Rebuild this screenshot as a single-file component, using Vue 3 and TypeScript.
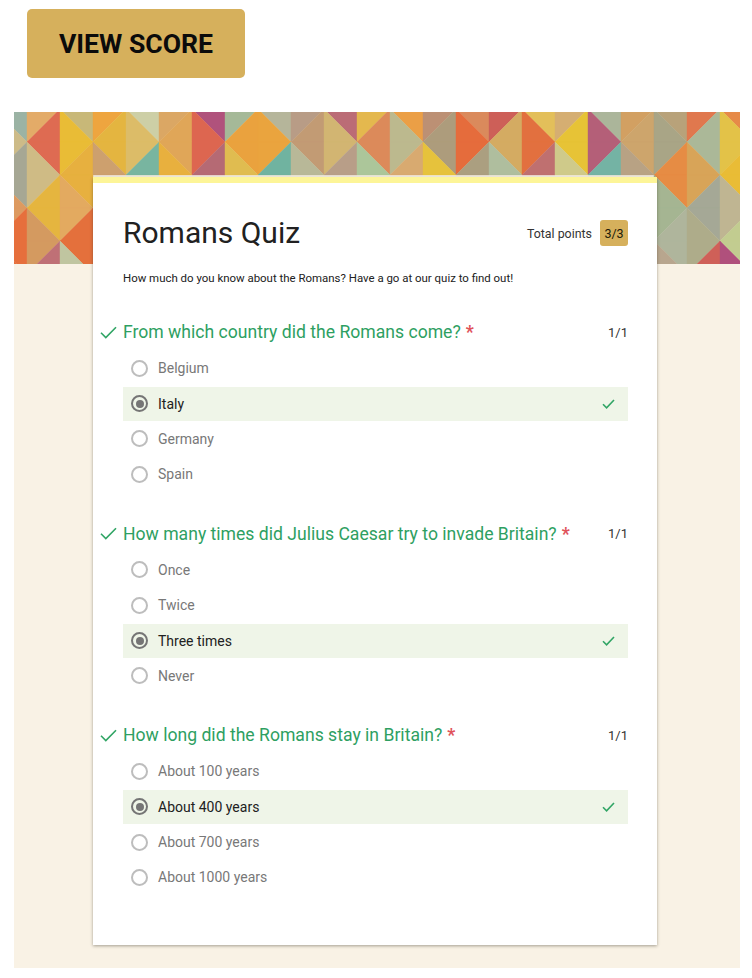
<script setup lang="ts">
interface Question {
  title: string
  options: string[]
  answer: string
}

const questions: Question[] = [
  {
    title: 'From which country did the Romans come?',
    options: ['Belgium', 'Italy', 'Germany', 'Spain'],
    answer: 'Italy',
  },
  {
    title: 'How many times did Julius Caesar try to invade Britain?',
    options: ['Once', 'Twice', 'Three times', 'Never'],
    answer: 'Three times',
  },
  {
    title: 'How long did the Romans stay in Britain?',
    options: ['About 100 years', 'About 400 years', 'About 700 years', 'About 1000 years'],
    answer: 'About 400 years',
  },
]

// Each cell of the banner's lattice: [column, row, top triangle, bottom triangle].
type Cell = [number, number, string, string]

const topRow = [
  ['#9bb3a4', '#cdbb88'], ['#e3ab68', '#de6b52'], ['#c8b878', '#e9bc36'], ['#eea53f', '#e4b540'],
  ['#cdcfa6', '#dcbc68'], ['#dba764', '#e0a658'], ['#b0527c', '#dd6650'], ['#a5b998', '#eaa23e'],
  ['#b5b59a', '#eaa43e'], ['#b89c86', '#c29b74'], ['#bb6c76', '#d2b572'], ['#e4b84e', '#dc8a5a'],
  ['#eb9f46', '#bcb98e'], ['#bc9074', '#ad9c7c'], ['#da8a5c', '#e56c3c'], ['#cd5f58', '#d4ab62'],
  ['#e3bf5a', '#e2703f'], ['#d5ae72', '#e7c336'], ['#abb59a', '#b45f78'], ['#d2a062', '#cda56c'],
  ['#b8a27a', '#a9a586'], ['#e0784e', '#abb898'], ['#e68a48', '#e3c248'],
]
const secondRow = [
  ['#cdbb88', '#a6a794'], ['#de6b52', '#cfbb85'], ['#e9bc36', '#e7b03f'], ['#e4b540', '#cda06e'],
  ['#dcbc68', '#78b5a0'], ['#e0a658', '#e8b03e'], ['#dd6650', '#b56a74'], ['#eaa23e', '#e0bc50'],
  ['#eaa43e', '#70b3a0'], ['#c29b74', '#b8b898'], ['#d2b572', '#b89e88'], ['#dc8a5a', '#acc69a'],
  ['#bcb98e', '#d8aa70'], ['#ad9c7c', '#e6c23c'], ['#e56c3c', '#ab9f80'], ['#d4ab62', '#afbe9e'],
  ['#e2703f', '#bf7070'], ['#e7c336', '#cfca8a'], ['#b45f78', '#74b3a4'], ['#cda56c', '#b8a284'],
  ['#a9a586', '#e68c44'], ['#abb898', '#d8a458'], ['#e3c248', '#e9bc36'],
]
const sideCells: Cell[] = [
  [0, 2, '#a6a794', '#dd9a60'], [1, 2, '#cfbb85', '#e5b53f'], [2, 2, '#e7b03f', '#e3aa60'],
  [20, 2, '#e68c44', '#a5b592'], [21, 2, '#d8a458', '#a5a896'], [22, 2, '#e9bc36', '#bfb592'],
  [0, 3, '#dd9a60', '#e66f3c'], [1, 3, '#e5b53f', '#d49a60'], [2, 3, '#e3aa60', '#e4703c'],
  [20, 3, '#a5b592', '#afb59c'], [21, 3, '#a5a896', '#aeac8a'], [22, 3, '#bfb592', '#c2cc90'],
  [0, 4, '#e66f3c', '#e66f3c'], [1, 4, '#d49a60', '#bf7076'], [2, 4, '#e4703c', '#c0c5a0'],
  [20, 4, '#afb59c', '#b8a68e'], [21, 4, '#aeac8a', '#cf6058'], [22, 4, '#c2cc90', '#b0507c'],
]

const size = 33
const originX = -20
const originY = -3

const cells: Cell[] = [
  ...topRow.map((c, i): Cell => [i, 0, c[0], c[1]]),
  ...secondRow.map((c, i): Cell => [i, 1, c[0], c[1]]),
  ...sideCells,
]

const triangles = cells.flatMap(([col, row, top, bottom]) => {
  const l = originX + col * size
  const t = originY + row * size
  const r = l + size
  const b = t + size
  const rising = (col + row) % 2 === 1
  const upper = rising ? `${l},${t} ${r},${t} ${l},${b}` : `${l},${t} ${r},${t} ${r},${b}`
  const lower = rising ? `${r},${t} ${r},${b} ${l},${b}` : `${l},${t} ${r},${b} ${l},${b}`
  return [
    { key: `${col}-${row}-a`, points: upper, fill: top },
    { key: `${col}-${row}-b`, points: lower, fill: bottom },
  ]
})
</script>

<template>
  <main class="page">
    <div class="toolbar">
      <button class="score-button" type="button">VIEW SCORE</button>
    </div>

    <div class="sheet">
      <svg class="banner" viewBox="0 0 726 152" width="726" height="152" aria-hidden="true">
        <polygon
          v-for="t in triangles"
          :key="t.key"
          :points="t.points"
          :fill="t.fill"
          :stroke="t.fill"
          stroke-width="0.4"
        />
      </svg>

      <section class="card">
        <header class="card-head">
          <h1 class="title">Romans Quiz</h1>
          <div class="total">
            <span>Total points</span>
            <span class="total-badge">3/3</span>
          </div>
        </header>
        <p class="description">How much do you know about the Romans? Have a go at our quiz to find out!</p>

        <article v-for="q in questions" :key="q.title" class="question">
          <div class="question-head">
            <svg class="tick" viewBox="0 0 17 13" width="17" height="13" aria-hidden="true">
              <path d="M1 6.8 L5.8 11.6 L16 1.2" />
            </svg>
            <h2 class="question-title">{{ q.title }}<span class="required">*</span></h2>
            <span class="points">1/1</span>
          </div>
          <ul class="options">
            <li
              v-for="opt in q.options"
              :key="opt"
              class="option"
              :class="{ selected: opt === q.answer }"
            >
              <span class="radio"></span>
              <span class="label">{{ opt }}</span>
              <svg
                v-if="opt === q.answer"
                class="tick tick-small"
                viewBox="0 0 13 10"
                width="13"
                height="10"
                aria-hidden="true"
              >
                <path d="M1 5.2 L4.6 8.8 L12 1" />
              </svg>
            </li>
          </ul>
        </article>
      </section>
    </div>
  </main>
</template>

<style>
html,
body {
  margin: 0;
  background: #ffffff;
}
</style>

<style scoped>
.page {
  width: 752px;
  font-family: Roboto, "Liberation Sans", sans-serif;
  color: #212121;
}

.toolbar {
  padding: 9px 0 34px 27px;
}

.score-button {
  display: block;
  width: 218px;
  height: 69px;
  padding: 0;
  border: 0;
  border-radius: 5px;
  background: #d6b05c;
  color: #0b0b0b;
  font-family: inherit;
  font-size: 26.6px;
  font-weight: 700;
}

.sheet {
  width: 726px;
  margin-left: 14px;
  padding-bottom: 23px;
  background: #f9f2e5;
}

.banner {
  display: block;
}

.card {
  position: relative;
  width: 505px;
  margin: -87px 0 0 79px;
  padding: 0 29px 50px 30px;
  border-top: 6px solid #fdf598;
  background: #ffffff;
  box-shadow: 0 1px 3px rgba(60, 55, 40, 0.45);
}

.card-head {
  display: flex;
  align-items: center;
  justify-content: space-between;
  height: 40px;
  padding-top: 30px;
}

.title {
  margin: 0;
  font-size: 30px;
  font-weight: 400;
  line-height: 40px;
  color: #212121;
}

.total {
  display: flex;
  align-items: center;
  gap: 8px;
  font-size: 12.4px;
  color: #333333;
}

.total-badge {
  display: flex;
  align-items: center;
  justify-content: center;
  width: 28px;
  height: 26px;
  border-radius: 3px;
  background: #d6b05c;
  font-size: 12.5px;
  color: #211a08;
}

.description {
  margin: 17px 0 28px;
  font-size: 11.44px;
  line-height: 16px;
  color: #212121;
}

.question + .question {
  margin-top: 23.5px;
}

.question-head {
  display: flex;
  align-items: center;
  height: 36.5px;
  margin-left: -23px;
}

.tick {
  flex: none;
  fill: none;
  stroke: #31a565;
  stroke-width: 1.6;
}

.question-head > .tick {
  margin-right: 6px;
}

.question-title {
  flex: 1;
  margin: 0;
  font-size: 17.6px;
  font-weight: 400;
  color: #2e9f62;
}

.required {
  margin-left: 5px;
  font-weight: 700;
  color: #e0525a;
}

.points {
  font-size: 13px;
  color: #333333;
}

.options {
  margin: 0;
  padding: 0;
  list-style: none;
}

.option {
  display: flex;
  align-items: center;
  box-sizing: border-box;
  height: 35.4px;
  padding: 0 13px 0 8px;
  font-size: 14px;
  color: #787878;
}

.option.selected {
  background: linear-gradient(#eff5e8, #eff5e8) no-repeat center / 100% 34px;
  color: #212121;
}

.radio {
  flex: none;
  box-sizing: border-box;
  display: flex;
  align-items: center;
  justify-content: center;
  width: 17px;
  height: 17px;
  margin-right: 10px;
  border: 2px solid #bdbdbd;
  border-radius: 50%;
  background: #ffffff;
}

.selected .radio {
  border-color: #757575;
  background: transparent;
}

.selected .radio::after {
  content: "";
  width: 8px;
  height: 8px;
  border-radius: 50%;
  background: #757575;
}

.label {
  flex: 1;
}
</style>
